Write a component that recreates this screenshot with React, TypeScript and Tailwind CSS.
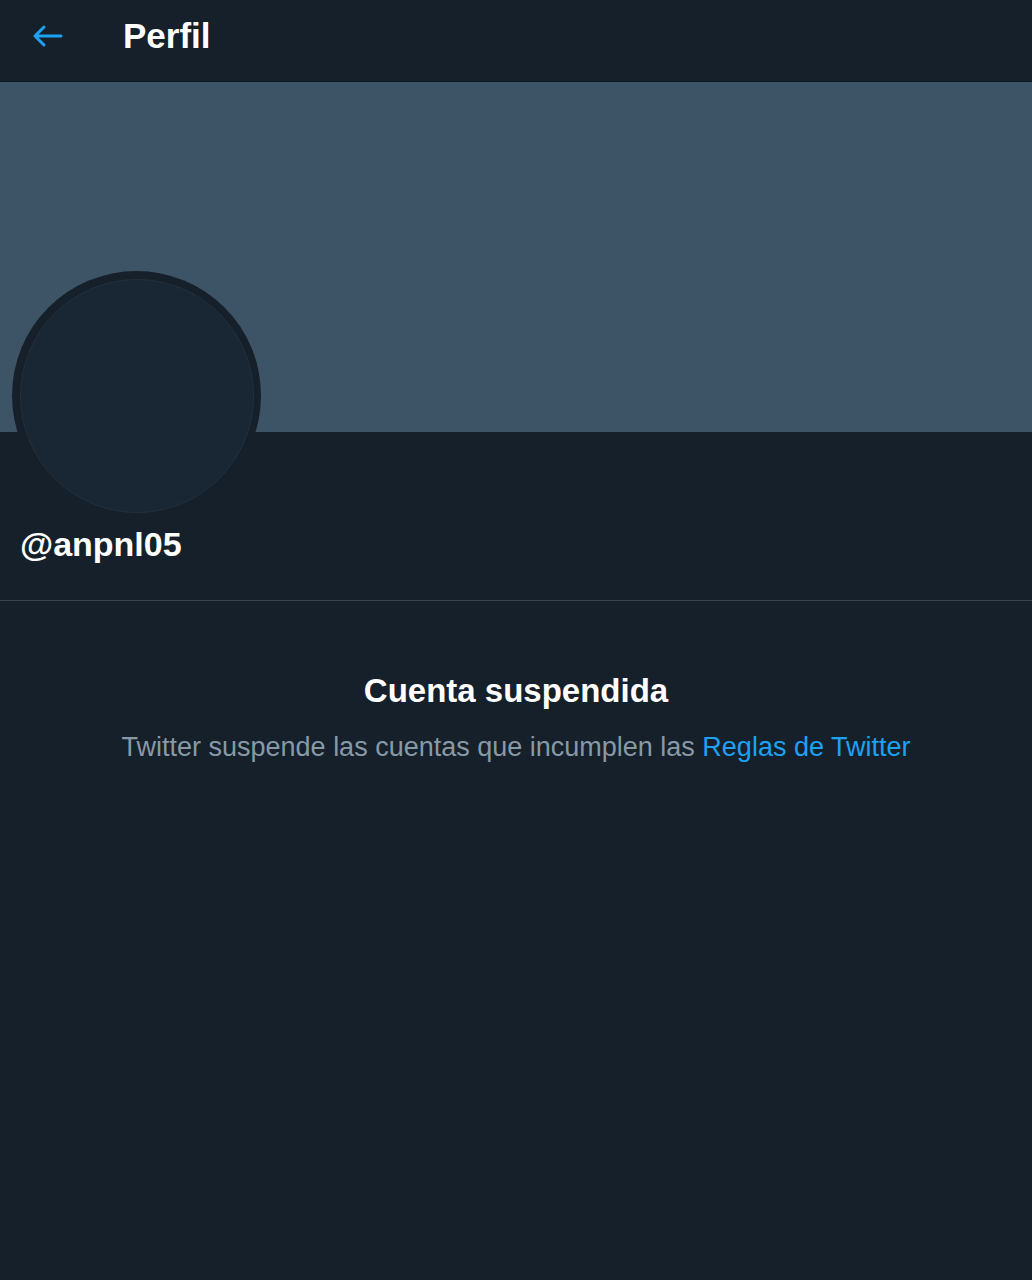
import React from "react";

const Profile: React.FC = () => {
  return (
    <div
      className="min-h-screen w-full bg-[#15202b] text-white"
      style={{ fontFamily: '"Liberation Sans", Arial, sans-serif' }}
    >
      {/* top bar */}
      <div className="flex h-[82px] items-center border-b border-[#101923] bg-[#15202b] pb-[10px]">
        <div className="flex w-[123px] items-center pl-[32px]">
          <svg width="31" height="24" viewBox="0 0 31 24" fill="none">
            <path
              d="M29 12H3M12 3L3 12l9 9"
              stroke="#1da1f2"
              strokeWidth="3"
              strokeLinecap="round"
              strokeLinejoin="round"
            />
          </svg>
        </div>
        <h1 className="text-[35px] font-bold leading-none">Perfil</h1>
      </div>

      {/* banner */}
      <div className="h-[350px] bg-[#3d5466]" />

      {/* avatar + handle */}
      <div className="border-b border-[#38444d] px-[20px] pb-[36px]">
        <div className="-ml-[8px] -mt-[161px] flex h-[249px] w-[249px] items-center justify-center rounded-full bg-[#15202b]">
          <div className="h-[234px] w-[234px] rounded-full border border-[#22303c] bg-[#192734]" />
        </div>
        <div className="mt-[4px] text-[34px] font-bold leading-[40px]">@anpnl05</div>
      </div>

      {/* suspended notice */}
      <div className="flex flex-col items-center pt-[70px]">
        <h2 className="text-[33px] font-bold leading-[40px]">Cuenta suspendida</h2>
        <p className="mt-[19px] text-[27px] leading-[34px] text-[#8899a6]">
          Twitter suspende las cuentas que incumplen las{" "}
          <a href="#" className="text-[#1da1f2]">
            Reglas de Twitter
          </a>
        </p>
      </div>
    </div>
  );
};

export default function App() {
  return <Profile />;
}
